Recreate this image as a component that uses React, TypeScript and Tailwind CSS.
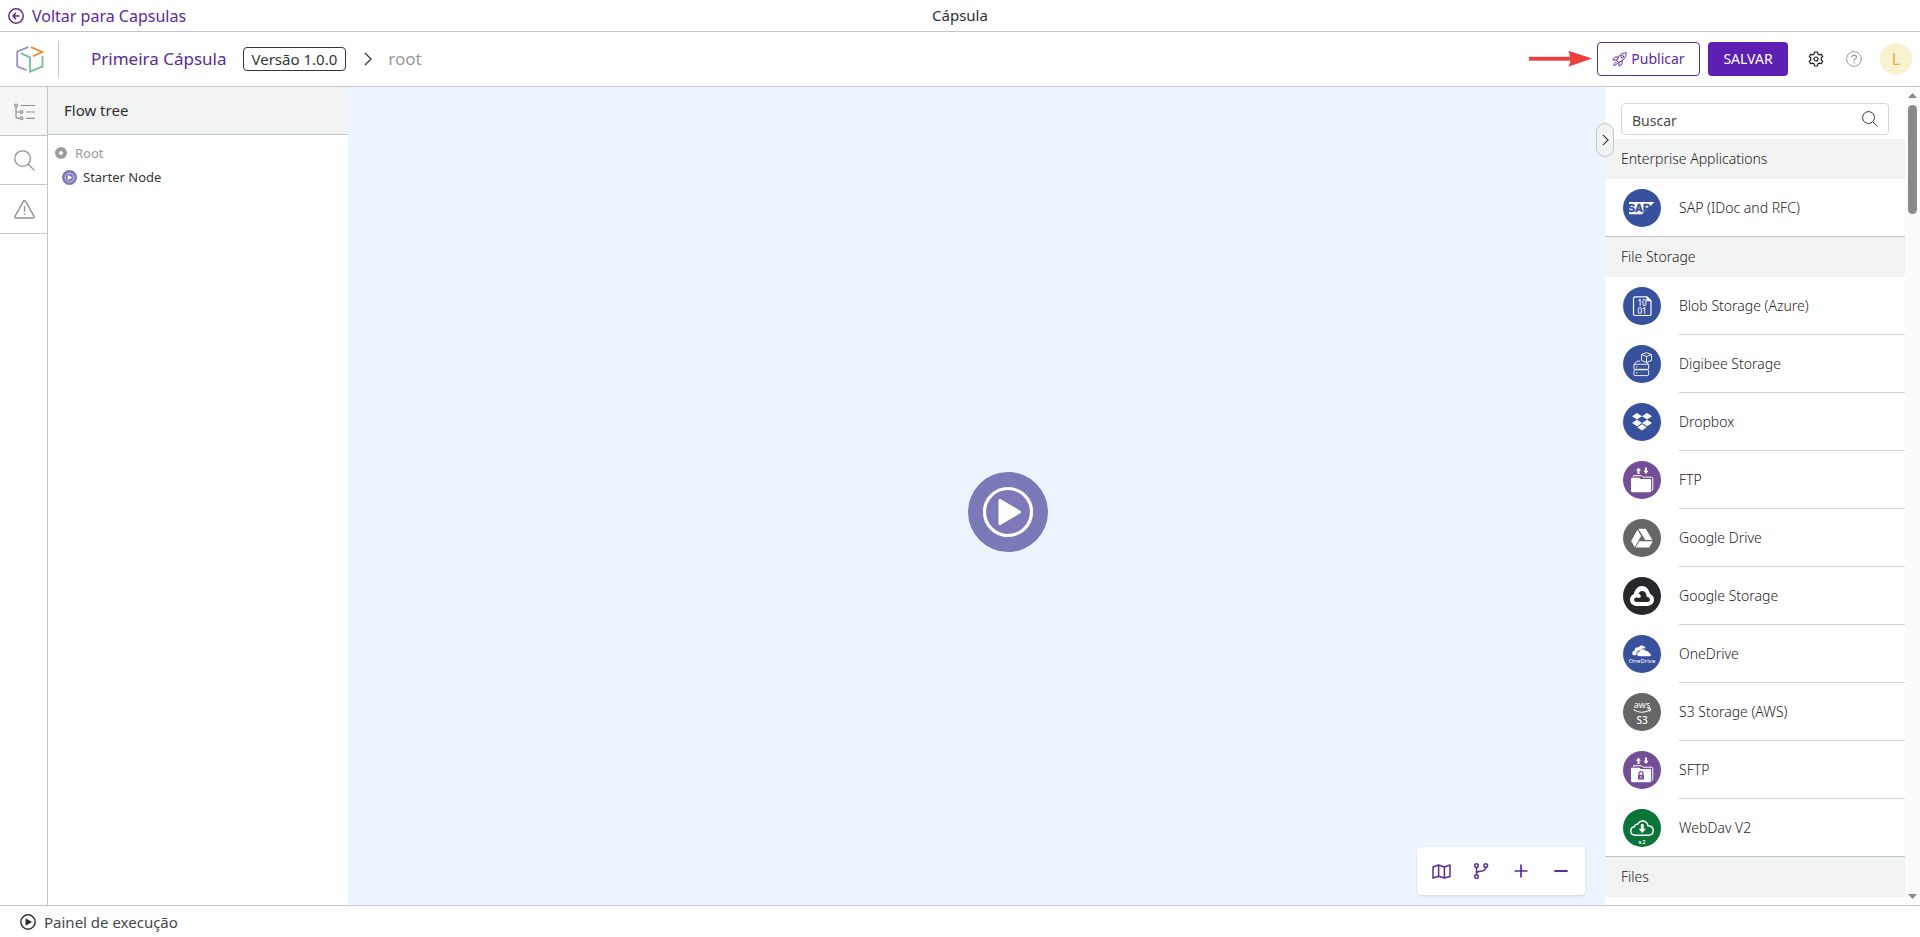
import React from 'react';

type IconProps = { className?: string };

const BLUE = '#37519d';
const PURPLE = '#744f97';
const GRAY = '#666666';

function BackIcon() {
  return (
    <svg className="size-4 shrink-0" viewBox="0 0 16 16" fill="none" stroke="currentColor" strokeWidth="1.5" strokeLinecap="round" strokeLinejoin="round" aria-hidden="true">
      <circle cx="8" cy="8" r="7.2" />
      <path d="M11 8H5M7.5 5.4 4.9 8l2.6 2.6" />
    </svg>
  );
}

function LogoIcon() {
  return (
    <svg className="h-[27px] w-7" viewBox="0 0 28 27" fill="none" strokeWidth="1.8" aria-hidden="true">
      <path d="M12.4 1.2 1.2 5.4v15.1l9.4 3.6" stroke="#9a93c6" />
      <path d="m5 7.4 9 4v14.2l12.5-5V9.8" stroke="#74bd96" />
      <path d="m15 1.2 11.500 5-9.500 4" stroke="#ea9040" />
    </svg>
  );
}

function ChevronRight({ className }: IconProps) {
  return (
    <svg className={className} viewBox="0 0 8 14" fill="none" stroke="currentColor" strokeWidth="1.3" aria-hidden="true">
      <path d="m1 1 6 6-6 6" />
    </svg>
  );
}

function RocketIcon() {
  return (
    <svg className="size-[15px]" viewBox="0 0 15 15" fill="none" stroke="currentColor" strokeWidth="1" strokeLinejoin="round" strokeLinecap="round" aria-hidden="true">
      <path d="M4.800 8.200C6.300 4 9.300.9 14.200.8c0 4.800-3.200 8.100-7.400 9.500z" />
      <circle cx="10.300" cy="4.700" r="1.300" />
      <path d="M6.300 5.200 3.400 4.900.8 7.800l4 .4M10 8.800l.2 2.900-3 2.600-.4-4M4 10.100c-1.500.4-2 2-2.200 3.300 1.400-.1 3-.6 3.400-2.100" />
    </svg>
  );
}

function GearIcon() {
  return (
    <svg className="size-4" viewBox="0 0 16 16" fill="none" stroke="#1d1d1d" strokeWidth="1.2" strokeLinejoin="round" aria-hidden="true">
      <path d="M6.600 1h2.800l.4 2 1.500.9 2-.7 1.400 2.400-1.500 1.400v2l1.500 1.400-1.400 2.400-2-.7-1.500.9-.4 2H6.600l-.4-2-1.500-.9-2 .7-1.400-2.400L2.800 9V7L1.300 5.600l1.400-2.400 2 .7L6.200 3z" />
      <circle cx="8" cy="8" r="2" />
    </svg>
  );
}

function HelpIcon() {
  return (
    <svg className="size-4" viewBox="0 0 16 16" fill="none" stroke="#96999b" strokeWidth="1" strokeLinecap="round" aria-hidden="true">
      <circle cx="8" cy="8" r="7.400" />
      <path d="M5.700 6.200c0-2.800 4.700-2.600 4.700 0 0 1.700-2.400 1.500-2.400 3.100" strokeWidth="1.200" />
      <path d="M8 11.500v.2" strokeWidth="1.400" />
    </svg>
  );
}

function RedArrow() {
  return (
    <svg className="h-[18px] w-16" viewBox="0 0 64 18" aria-hidden="true">
      <path d="M0 6.800h41L39.500.8l23.500 7.700-23.500 8.300 2-6H0z" fill="#cf5a55" />
      <path d="M0 7.300h41.500L40.800 1.800l21 6.700-21 7 1.200-5.500H0z" fill="#ee3e3e" />
    </svg>
  );
}

function TreeIcon() {
  return (
    <svg className="h-[18px] w-[21px]" viewBox="0 0 21 18" fill="none" stroke="#8f9293" strokeWidth="1.200" aria-hidden="true">
      <circle cx="2" cy="2.500" r="1.400" />
      <circle cx="7.500" cy="9" r="1.400" />
      <circle cx="7.500" cy="15.300" r="1.400" />
      <path d="M2 4v9.300a2 2 0 0 0 2 2h2M2 9h4M6.500 2.500H21M12 9h9M12 15.300h9" />
    </svg>
  );
}

function SearchIcon({ className }: IconProps) {
  return (
    <svg className={className} viewBox="0 0 21 21" fill="none" stroke="currentColor" strokeWidth="1.300" aria-hidden="true">
      <circle cx="8.600" cy="8.600" r="7.800" />
      <path d="m14.200 14.200 6.200 6.200" />
    </svg>
  );
}

function WarningIcon() {
  return (
    <svg className="h-[19px] w-[21px]" viewBox="0 0 21 19" fill="none" stroke="#8f9293" strokeWidth="1.400" strokeLinejoin="round" aria-hidden="true">
      <path d="M9.400 1.400a1.300 1.300 0 0 1 2.200 0l8.300 14.700c.5.900 0 1.900-1 1.900H2.100c-1 0-1.500-1-1-1.900z" />
      <path d="M10.500 6v5.700M10.500 13.400V15" />
    </svg>
  );
}

function PlayCircle({ className }: IconProps) {
  return (
    <svg className={className} viewBox="0 0 16 16" aria-hidden="true">
      <circle cx="8" cy="8" r="7.200" fill="none" stroke="currentColor" strokeWidth="1.400" />
      <path d="M5.500 5.200c0-.5.500-.7.900-.5l5 2.800c.4.300.4.700 0 1l-5 2.800c-.4.200-.9 0-.9-.5z" fill="currentColor" />
    </svg>
  );
}

function StartNode({ className }: IconProps) {
  return (
    <svg className={className} viewBox="0 0 80 80" aria-hidden="true">
      <circle cx="40" cy="40" r="40" fill="#7c79b8" />
      <circle cx="40" cy="40" r="23.500" fill="none" stroke="#fff" strokeWidth="3.200" />
      <path d="M32 28.500v23L51.500 40z" fill="#fff" stroke="#fff" strokeWidth="3" strokeLinejoin="round" />
    </svg>
  );
}

function MapIcon() {
  return (
    <svg className="h-[15px] w-[19px]" viewBox="0 0 19 15" fill="none" stroke="currentColor" strokeWidth="1.500" strokeLinejoin="round" aria-hidden="true">
      <path d="m1 3 5.600-2 5.800 2L18 1v11.500L12.400 14l-5.800-1.800L1 14zM6.600 1v11.200M12.400 3v11" />
    </svg>
  );
}

function BranchIcon() {
  return (
    <svg className="size-4" viewBox="0 0 16 16" fill="none" stroke="currentColor" strokeWidth="1.500" aria-hidden="true">
      <circle cx="3.500" cy="2.600" r="1.800" />
      <circle cx="3.500" cy="13.600" r="1.800" />
      <circle cx="12.800" cy="2.600" r="1.800" />
      <path d="M3.500 4.400v7.400M3.500 9.800c1-1.500 2.500-1.500 4.500-1.600 3-.2 4.300-1.200 4.800-3.800" />
    </svg>
  );
}

function PlusIcon() {
  return (
    <svg className="size-3.5" viewBox="0 0 14 14" stroke="currentColor" strokeWidth="1.700" aria-hidden="true">
      <path d="M7 .5v13M.5 7h13" />
    </svg>
  );
}

function MinusIcon() {
  return (
    <svg className="size-3.5" viewBox="0 0 14 14" stroke="currentColor" strokeWidth="1.800" strokeLinecap="round" aria-hidden="true">
      <path d="M1 7h12" />
    </svg>
  );
}

function Badge({ color, children }: { color: string; children: React.ReactNode }) {
  return (
    <svg className="size-[38px] shrink-0" viewBox="0 0 38 38" aria-hidden="true">
      <circle cx="19" cy="19" r="19" fill={color} />
      {children}
    </svg>
  );
}

function IconText(props: { y: number; size: number; weight?: number; fill?: string; x?: number; children: string }) {
  return (
    <text x={props.x ?? 19} y={props.y} fontSize={props.size} fontWeight={props.weight ?? 400} fill={props.fill ?? '#fff'} textAnchor="middle">
      {props.children}
    </text>
  );
}

function Folders() {
  return (
    <>
      <path d="M15.500 6.500 18 9.800h-1.500V13h-2V9.800H13zM23 13l2.500-3.300H24V6.500h-2v3.200h-1.500z" fill="#fff" />
      <path d="M10.500 16v-1.300h8l1.500 1.500h8.500c.7 0 1.300.5 1.300 1.200v11c0 .7-.5 1.300-1.300 1.300" fill="none" stroke="#fff" strokeWidth="1" />
      <path d="M8 18c0-.8.500-1.300 1.300-1.300h7l1.500 1.400h9c.8 0 1.300.5 1.300 1.300v10.400c0 .8-.5 1.400-1.300 1.400H9.300c-.8 0-1.300-.6-1.300-1.400z" fill="#fff" />
    </>
  );
}

const diamond = (x: number, y: number) => `M${x - 5} ${y}l5-3.200 5 3.200-5 3.200z`;

const sapIcon = (
  <Badge color={BLUE}>
    <path d="M6 13h25.500L19 25.200H6z" fill="#fff" />
    <text x="16" y="23" fontSize="11" fontWeight="700" fontFamily="Liberation Sans, sans-serif" fill={BLUE} stroke={BLUE} strokeWidth=".5" textAnchor="middle">SAP</text>
  </Badge>
);

const blobIcon = (
  <Badge color={BLUE}>
    <path d="M12 9.800h12l4 4V27a1.500 1.500 0 0 1-1.500 1.500H12a1.500 1.500 0 0 1-1.500-1.500V11.300A1.500 1.500 0 0 1 12 9.800z" fill="none" stroke="#fff" strokeWidth="1.200" />
    <path d="M23.500 9.500v4.800h4.800z" fill="#fff" />
    <IconText y={18.800} size={8} weight={500}>10</IconText>
    <IconText y={26.600} size={8} weight={500}>01</IconText>
  </Badge>
);

const digibeeIcon = (
  <Badge color={BLUE}>
    <g fill="none" stroke="#fff" strokeWidth=".9" strokeLinejoin="round">
      <path d="m18.500 9.500 5-1.800 5 1.800v6l-5 2-5-2zM18.500 9.500l5 2 5-2M23.500 11.500v6" />
      <path d="M11 19.300 14 16.200h3M11 19.300h14.500l-1.500-1.500M11 19.300v4.200c0 .5.300.8.800.8h13c.5 0 .8-.3.8-.8v-4.200M11.800 24.800h13c.5 0 .8.300.8.800v4.200c0 .5-.3.800-.8.800h-13c-.5 0-.8-.3-.8-.8v-4.200c0-.5.300-.8.800-.8zM13 21.800h1.500M13 27.800h1.500" />
    </g>
  </Badge>
);

const dropboxIcon = (
  <Badge color={BLUE}>
    <path d={diamond(14, 13.2) + diamond(24, 13.2) + diamond(14, 20) + diamond(24, 20) + 'M14.200 24.300l4.800-3.100 4.800 3.100-4.800 3.200z'} fill="#fff" />
  </Badge>
);

const ftpIcon = (
  <Badge color={PURPLE}>
    <Folders />
  </Badge>
);

const sftpIcon = (
  <Badge color={PURPLE}>
    <Folders />
    <path d="M16 24v-1.300a2 2 0 0 1 4 0V24" fill="none" stroke={PURPLE} strokeWidth="1.200" />
    <rect x="15" y="23.800" width="6" height="4.700" rx=".5" fill={PURPLE} />
    <circle cx="18" cy="26" r=".8" fill="#fff" />
  </Badge>
);

const driveIcon = (
  <Badge color={GRAY}>
    <path d="M15.300 9.700h7.400l6.700 11.400h-7.100zM14.500 10.800l3.600 6.100-6.300 11.400-3.600-6.300zM16.200 22.200h13.500l-3.500 6.200H12.700z" fill="#fff" />
  </Badge>
);

const gcsIcon = (
  <Badge color="#28272c">
    <path d="M14.500 29c-4.300 0-7.500-2.500-7.500-6.300 0-2.600 1.500-4.600 3.800-5.600C11.800 12.500 15 9 19 9s7.200 3.500 8.200 8.100c2.300 1 3.800 3 3.800 5.600 0 3.800-3.200 6.300-7.500 6.300z" fill="#fff" />
    <path d="M13.800 25c-1.700 0-2.700-1-2.700-2.300s1.100-2.200 2.700-2.200c1 0 1.500.4 2.100.4 1.700 0 2.400-1.300 1.600-2.700-.5-.9-1.400-1.500-2-1.800 1-1.700 2.100-2.500 3.700-2.500 2.500 0 4.300 2.500 4.700 6.100 1.900.2 3 1.200 3 2.700 0 1.300-1 2.300-2.700 2.300z" fill="#28272c" />
  </Badge>
);

const onedriveIcon = (
  <Badge color={BLUE}>
    <path d="M9.500 19.500c-.8-2 .3-3.800 2-4.100.2-2.300 2-3.500 4-3 1.700-2.700 6-2.700 7.200 1-3-.6-4.600.5-5.500 2.200-2.800-.2-4.200 1.800-3.700 4.300-1.900.3-3.300.5-4-.4z" fill="#fff" />
    <path d="M16.500 21.200c-3.300 0-3.200-4.500.3-4.600.6-2.900 4.600-3.300 6-.6 2-.3 3.300.8 3.300 2.300 2.300 0 2.400 2.900.3 2.900z" fill="#fff" />
    <IconText y={28.200} size={6}>OneDrive</IconText>
  </Badge>
);

const s3Icon = (
  <Badge color={GRAY}>
    <IconText y={14.500} size={9} weight={400}>aws</IconText>
    <path d="M10.500 16.600c5 3.200 11 3.200 16 .6M24.800 15.800c1-.3 2.200-.3 2.700 0 0 1-.4 2-1 2.700" fill="none" stroke="#fff" strokeWidth="1.100" />
    <IconText y={30.800} size={10} weight={500}>S3</IconText>
  </Badge>
);

const webdavIcon = (
  <Badge color="#0b7439">
    <path d="M12.500 26.200c-2.700 0-4.700-1.600-4.700-4.200 0-2.300 1.600-3.900 3.700-4.200.2-1.800 1.500-2.800 3.200-2.600 2.700-5 9.200-4 10.200 1.500 3.300.2 5.300 2.200 5.300 4.900 0 2.800-2 4.600-4.700 4.600z" fill="none" stroke="#fff" strokeWidth="1.400" />
    <path d="M17.900 15h2.800v4.700h2.200l-3.600 4.300-3.600-4.300h2.200z" fill="#fff" />
    <IconText y={34.500} size={5} weight={700}>v.2</IconText>
  </Badge>
);

const catalog = [
  { title: 'Enterprise Applications', items: [{ name: 'SAP (IDoc and RFC)', icon: sapIcon }] },
  {
    title: 'File Storage',
    items: [
      { name: 'Blob Storage (Azure)', icon: blobIcon },
      { name: 'Digibee Storage', icon: digibeeIcon },
      { name: 'Dropbox', icon: dropboxIcon },
      { name: 'FTP', icon: ftpIcon },
      { name: 'Google Drive', icon: driveIcon },
      { name: 'Google Storage', icon: gcsIcon },
      { name: 'OneDrive', icon: onedriveIcon },
      { name: 'S3 Storage (AWS)', icon: s3Icon },
      { name: 'SFTP', icon: sftpIcon },
      { name: 'WebDav V2', icon: webdavIcon },
    ],
  },
  { title: 'Files', items: [] },
];

function TopBar() {
  return (
    <div className="grid h-8 shrink-0 grid-cols-3 items-center border-b border-[#c4c7c9] px-2 text-[15px]">
      <a href="#capsulas" className="flex items-center gap-2 text-base text-[#5b2a9d]">
        <BackIcon />
        Voltar para Capsulas
      </a>
      <h1 className="text-center text-[#2c3033]">Cápsula</h1>
    </div>
  );
}

function Header() {
  return (
    <header className="flex h-[55px] shrink-0 items-center justify-between border-b border-[#c4c7c9] pr-2 pl-4">
      <div className="flex items-center">
        <LogoIcon />
        <div className="ml-3.5 h-9 w-px bg-[#c4c7c9]" />
        <span className="ml-8 text-[17px] text-[#5b2a9d]">Primeira Cápsula</span>
        <span className="ml-4 flex h-6 items-center rounded border border-[#33363a] px-2 text-[15px] text-[#33363a]">Versão 1.0.0</span>
        <ChevronRight className="ml-[18px] h-3.5 w-2 text-[#33363a]" />
        <span className="ml-4 text-[17px] text-[#96999c]">root</span>
      </div>
      <div className="flex items-center">
        <RedArrow />
        <button type="button" className="ml-1 flex h-[34px] w-[103px] items-center justify-center gap-1 rounded border border-[#5b2a9d] text-sm text-[#5b2a9d]">
          <RocketIcon />
          Publicar
        </button>
        <button type="button" className="ml-2 h-[34px] w-20 rounded bg-[#5e1fb4] text-sm text-white">SALVAR</button>
        <button type="button" aria-label="Configurações" className="ml-5">
          <GearIcon />
        </button>
        <button type="button" aria-label="Ajuda" className="ml-[22px]">
          <HelpIcon />
        </button>
        <button type="button" className="ml-[18px] size-8 rounded-full bg-[#f9f2cf] text-base text-[#e2ab45]">L</button>
      </div>
    </header>
  );
}

function Rail() {
  return (
    <nav className="flex w-12 shrink-0 flex-col border-r border-[#c4c7c9]">
      <button type="button" aria-label="Flow tree" className="flex h-[49px] items-center justify-center border-b border-[#c4c7c9] bg-[#f6f6f6] pt-px pl-px">
        <TreeIcon />
      </button>
      <button type="button" aria-label="Buscar" className="flex h-[49px] items-center justify-center border-b border-[#c4c7c9] pt-px pl-px text-[#8f9293]">
        <SearchIcon className="size-[21px]" />
      </button>
      <button type="button" aria-label="Alertas" className="flex h-[49px] items-center justify-center border-b border-[#c4c7c9] pt-px pl-px">
        <WarningIcon />
      </button>
    </nav>
  );
}

function FlowTree() {
  return (
    <section className="w-[300px] shrink-0">
      <h2 className="flex h-12 items-center border-b border-[#c4c7c9] bg-[#f1f3f3] pl-4 text-[15px] text-[#2c3033]">Flow tree</h2>
      <ul className="pt-1.5 text-[13px] leading-6">
        <li className="flex items-center gap-2 pl-[7px] text-[#96999c]">
          <svg className="size-3" viewBox="0 0 12 12" aria-hidden="true">
            <circle cx="6" cy="6" r="4" fill="none" stroke="#9a9c9d" strokeWidth="4" />
          </svg>
          Root
        </li>
        <li className="flex items-center gap-1.5 pl-3.5 text-[#33363a]">
          <StartNode className="size-[15px]" />
          Starter Node
        </li>
      </ul>
    </section>
  );
}

function Canvas() {
  return (
    <main className="relative min-w-0 grow bg-[#ecf5fd]">
      <button type="button" aria-label="Starter Node" className="absolute top-[385px] left-[620px] rounded-full">
        <StartNode className="size-20" />
      </button>
      <div className="absolute right-5 bottom-2.5 flex h-12 items-center rounded bg-white px-1 text-[#5b2a9d] shadow">
        <button type="button" aria-label="Mapa" className="flex size-10 items-center justify-center"><MapIcon /></button>
        <button type="button" aria-label="Ramificações" className="flex size-10 items-center justify-center"><BranchIcon /></button>
        <button type="button" aria-label="Aumentar zoom" className="flex size-10 items-center justify-center"><PlusIcon /></button>
        <button type="button" aria-label="Diminuir zoom" className="flex size-10 items-center justify-center"><MinusIcon /></button>
      </div>
    </main>
  );
}

function Catalog() {
  return (
    <aside className="relative flex w-[315px] shrink-0">
      <button type="button" aria-label="Recolher painel" className="absolute top-9 -left-[9px] z-10 flex h-[34px] w-[18px] items-center justify-center rounded-full border border-[#c4c7c9] bg-[#f1f3f3] text-[#33363a]">
        <ChevronRight className="h-3 w-[7px]" />
      </button>
      <div className="min-w-0 grow overflow-y-auto [scrollbar-width:none]">
        <label className="mx-4 mt-4 mb-1 flex h-8 items-center rounded border border-[#d5d8d9] pr-2.5 pl-2.5 text-[#33363a]">
          <input type="text" placeholder="Buscar" aria-label="Buscar" className="min-w-0 grow pt-1 text-sm outline-none placeholder:text-[#484b4e]" />
          <SearchIcon className="size-4" />
        </label>
        {catalog.map((group) => (
          <section key={group.title}>
            <h3 className="flex h-10 items-center bg-[#f1f3f3] px-4 text-sm font-light text-[#1f2225]">{group.title}</h3>
            <ul className="text-sm font-light text-[#1f2225]">
              {group.items.map((item) => (
                <li key={item.name} className="group flex h-[58px] items-stretch pl-[18px] last:border-b last:border-[#c4c7c9]">
                  <span className="flex items-center pb-px group-last:pb-0">{item.icon}</span>
                  <span className="ml-[18px] flex grow items-center border-b border-[#d0d2d3] group-last:border-b-0">{item.name}</span>
                </li>
              ))}
            </ul>
          </section>
        ))}
        <div className="h-16" />
      </div>
      <div className="flex w-[15px] shrink-0 flex-col items-center bg-[#fbfbfb] py-1.5" aria-hidden="true">
        <svg className="h-[5px] w-[9px]" viewBox="0 0 9 5"><path d="M4.500 0 9 5H0z" fill="#8a8a8a" /></svg>
        <div className="mt-[7px] h-[109px] w-[9px] rounded-full bg-[#8a8a8a]" />
        <svg className="mt-auto h-[5px] w-[9px]" viewBox="0 0 9 5"><path d="M0 0h9L4.500 5z" fill="#8a8a8a" /></svg>
      </div>
    </aside>
  );
}

export default function App() {
  return (
    <div className="flex h-screen flex-col overflow-hidden bg-white font-['Noto_Sans',sans-serif]">
      <TopBar />
      <Header />
      <div className="flex min-h-0 grow">
        <Rail />
        <FlowTree />
        <Canvas />
        <Catalog />
      </div>
      <footer className="flex h-8 shrink-0 items-center border-t border-[#c4c7c9] pt-px pl-5">
        <button type="button" className="flex items-center gap-2 text-[15px] text-[#44474a]">
          <PlayCircle className="size-4 text-[#2c3033]" />
          Painel de execução
        </button>
      </footer>
    </div>
  );
}
